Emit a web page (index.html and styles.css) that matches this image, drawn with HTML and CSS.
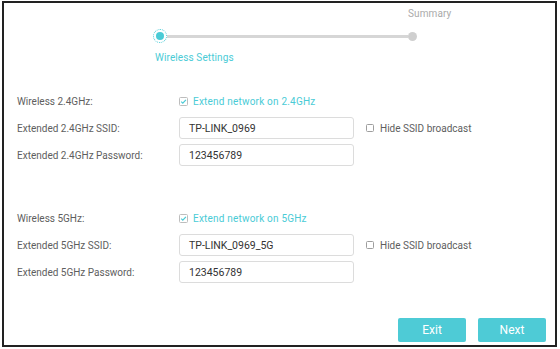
FILE: index.html
```html
<!DOCTYPE html>
<html>
<head>
<meta charset="utf-8">
<link rel="stylesheet" href="styles.css">
</head>
<body>
<div class="frame">
  <div class="stepper">
    <div class="step step-first">
      <span class="step-label top"></span>
      <span class="dot dot-active"><span class="dot-core"></span></span>
      <span class="step-label bottom active">Wireless Settings</span>
    </div>
    <div class="line"></div>
    <div class="step step-last">
      <span class="step-label top">Summary</span>
      <span class="dot dot-idle"></span>
      <span class="step-label bottom"></span>
    </div>
  </div>

  <div class="form">
    <div class="section">
      <div class="row">
        <span class="label">Wireless 2.4GHz:</span>
        <label class="check checked">
          <svg class="box" width="9" height="9" viewBox="0 0 9 9"><rect x="0.5" y="0.5" width="8" height="8" rx="1" fill="#fff" stroke="#bdbdbd"/><path d="M2.2 4.6 L3.8 6.1 L6.9 2.8" fill="none" stroke="#4acbd6" stroke-width="1.2"/></svg>
          <span class="check-text cyan">Extend network on 2.4GHz</span>
        </label>
      </div>
      <div class="row">
        <span class="label">Extended 2.4GHz SSID:</span>
        <div class="input">TP-LINK_0969</div>
        <label class="check hide">
          <svg class="box" width="8" height="8" viewBox="0 0 8 8"><rect x="0.5" y="0.5" width="7" height="7" rx="1" fill="#fff" stroke="#9e9e9e"/></svg>
          <span class="check-text">Hide SSID broadcast</span>
        </label>
      </div>
      <div class="row">
        <span class="label">Extended 2.4GHz Password:</span>
        <div class="input">123456789</div>
      </div>
    </div>

    <div class="section section-second">
      <div class="row">
        <span class="label">Wireless 5GHz:</span>
        <label class="check checked">
          <svg class="box" width="9" height="9" viewBox="0 0 9 9"><rect x="0.5" y="0.5" width="8" height="8" rx="1" fill="#fff" stroke="#bdbdbd"/><path d="M2.2 4.6 L3.8 6.1 L6.9 2.8" fill="none" stroke="#4acbd6" stroke-width="1.2"/></svg>
          <span class="check-text cyan">Extend network on 5GHz</span>
        </label>
      </div>
      <div class="row">
        <span class="label">Extended 5GHz SSID:</span>
        <div class="input">TP-LINK_0969_5G</div>
        <label class="check hide">
          <svg class="box" width="8" height="8" viewBox="0 0 8 8"><rect x="0.5" y="0.5" width="7" height="7" rx="1" fill="#fff" stroke="#9e9e9e"/></svg>
          <span class="check-text">Hide SSID broadcast</span>
        </label>
      </div>
      <div class="row">
        <span class="label">Extended 5GHz Password:</span>
        <div class="input">123456789</div>
      </div>
    </div>
  </div>

  <div class="actions">
    <button class="btn">Exit</button>
    <button class="btn">Next</button>
  </div>
</div>
</body>
</html>
```

FILE: styles.css
```css
html, body {
  margin: 0;
  padding: 0;
  background: #fff;
}

body {
  font-family: Roboto, "Liberation Sans", Arial, sans-serif;
  font-size: 10px;
  color: #5e5e5e;
}

.frame {
  box-sizing: border-box;
  width: 555px;
  height: 346px;
  margin: 1px 0 0 2px;
  border: 2px solid #222;
  display: flex;
  flex-direction: column;
}

/* stepper */
.stepper {
  display: flex;
  width: 264px;
  margin-left: 149px;
}

.step {
  display: grid;
  grid-template-rows: 22px 22px 22px;
  align-items: center;
}

.step-first { width: 14px; }
.step-last { width: 9px; }

.step-label {
  white-space: nowrap;
  font-size: 10px;
  color: #aaa;
  line-height: 12px;
  letter-spacing: 0.1px;
}

.step-label.active {
  color: #4acbd6;
  margin-left: 2px;
}

.line {
  flex: 1;
  height: 3px;
  align-self: center;
  background: #d6d6d6;
}

.dot {
  display: flex;
  align-items: center;
  justify-content: center;
  border-radius: 50%;
}

.dot-active {
  box-sizing: border-box;
  width: 14px;
  height: 14px;
  border: 1.5px dotted #4acbd6;
}

.dot-core {
  width: 8px;
  height: 8px;
  border-radius: 50%;
  background: #4acbd6;
}

.dot-idle {
  width: 9px;
  height: 9px;
  background: #cfcfcf;
}

/* form */
.form {
  margin-top: 21px;
  padding-left: 13px;
}

.section {
  display: flex;
  flex-direction: column;
  gap: 5px;
}

.section-second { margin-top: 41px; }

.row {
  display: flex;
  align-items: center;
  height: 22px;
}

.label {
  width: 162px;
  flex: none;
  color: #5e5e5e;
}

.check {
  display: flex;
  align-items: center;
  gap: 5px;
}

.box { display: block; flex: none; }

.check-text { color: #5e5e5e; }

.check-text.cyan {
  color: #4acbd6;
  letter-spacing: 0.2px;
}

.check.hide {
  margin-left: 12px;
  gap: 6px;
}

.input {
  box-sizing: border-box;
  width: 175px;
  height: 22px;
  border: 1px solid #dcdcdc;
  border-radius: 3px;
  padding-left: 9px;
  display: flex;
  align-items: center;
  font-size: 10.5px;
  color: #333;
}

/* actions */
.actions {
  margin-top: auto;
  padding: 0 9px 3px 0;
  display: flex;
  justify-content: flex-end;
  gap: 12px;
}

.btn {
  width: 68px;
  height: 24px;
  border: none;
  border-radius: 2px;
  background: #4ecbd6;
  color: #fff;
  font-family: Roboto, "Liberation Sans", Arial, sans-serif;
  font-size: 12px;
  padding: 0;
}
```
